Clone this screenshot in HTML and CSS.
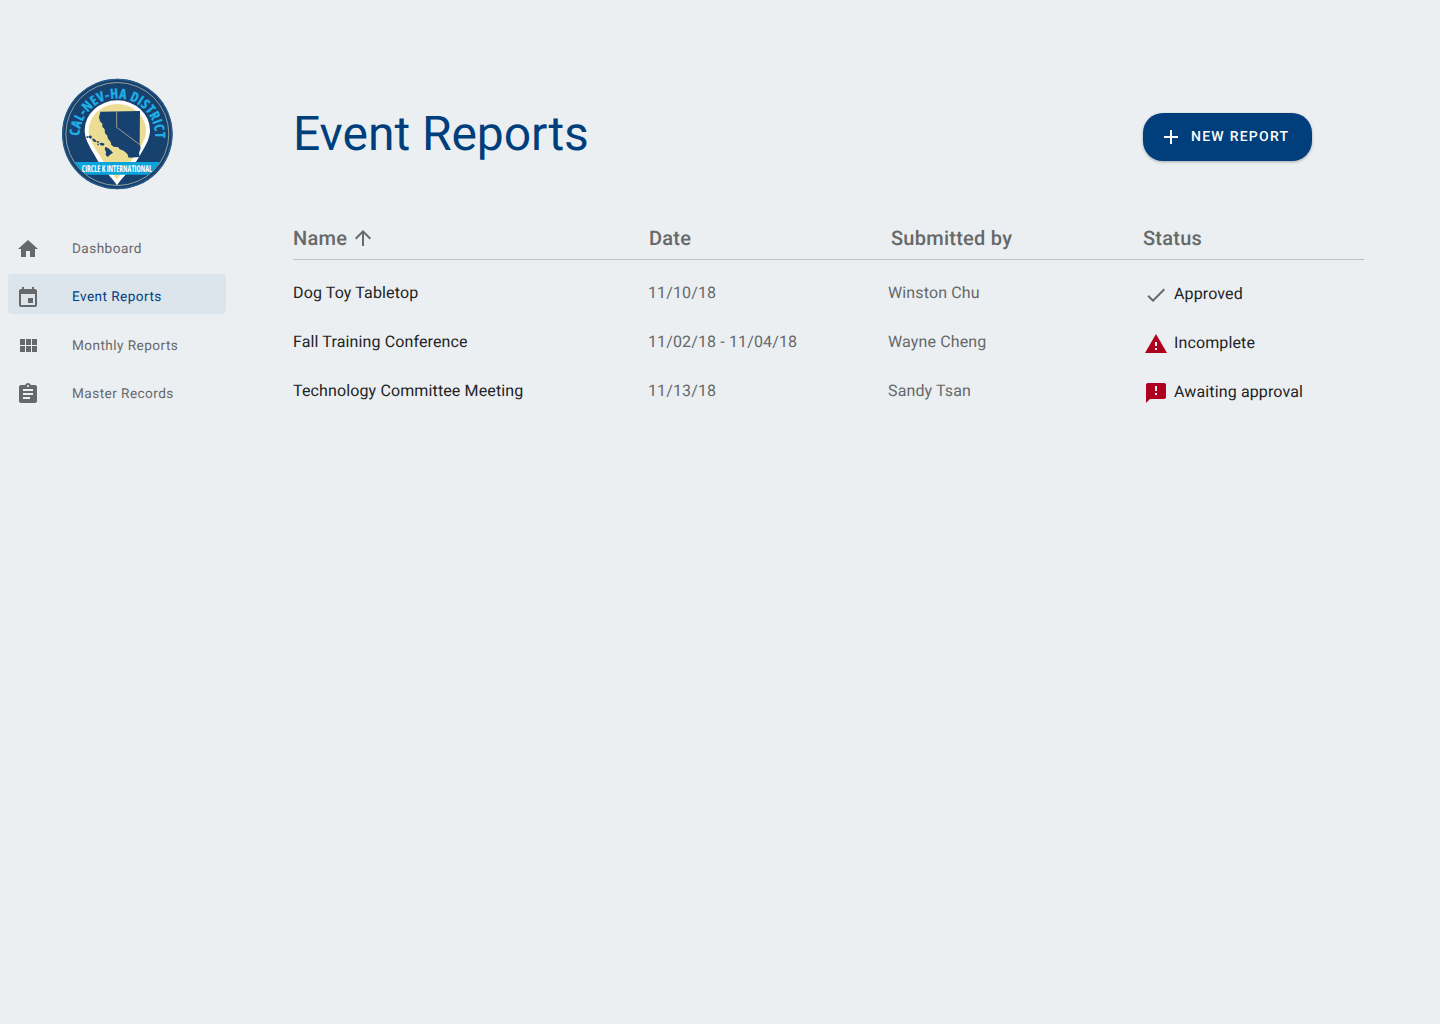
FILE: index.html
```html
<!DOCTYPE html>
<html lang="en">
<head>
<meta charset="utf-8">
<title>Event Reports</title>
<link rel="stylesheet" href="styles.css">
</head>
<body>
<div class="app">
  <aside class="sidebar">
    <svg class="logo" viewBox="0 0 360 360" role="img" aria-label="Cal-Nev-Ha District, Circle K International">
      <defs>
        <path id="arc" d="M67 187A114 114 0 1 1 295 187V215"/>
        <clipPath id="disc"><circle cx="181" cy="180" r="153"/></clipPath>
      </defs>
      <circle cx="181" cy="180" r="166" fill="#17416f"/>
      <circle cx="181" cy="180" r="164" fill="none" stroke="#2b6292" stroke-width="3"/>
      <circle cx="181" cy="180" r="154.500" fill="none" stroke="#a9b5a0" stroke-width="2.500"/>
      <path d="M180 334C166 311 137 290 113 244C96 216 83 193 83 169A98 90 0 0 1 279 169C279 193 266 216 249 244C223 290 194 311 180 334Z" fill="#fff"/>
      <path d="M180 317C168 298 148 279 127 243C108 214 95 194 95 170A86 80 0 0 1 267 170C267 194 254 214 235 243C212 279 192 298 180 317Z" fill="#ecdd95"/>
      <path d="M130 113L249 111L248 211L251 223L246 237L248 249L215 251L211 240L200 230L188 226L184 220L170 218L163 213L161 204L153 194L151 185L144 178L143 166L136 158L136 149L129 142L126 130Z" fill="#17416f"/>
      <path d="M179 113V160L247 211" fill="none" stroke="#d7cf94" stroke-width="2"/>
      <path d="M87 189l5-3 3 3-4 4zM95 187l5-3 5 4-3 6-7-3zM107 193l8 4 4 6-7 1-6-7zM119 202l8 0-2 4-5 0zM121 209l5 0-1 5-4-1zM127 208l9-2 7 4-4 5-8-1zM145 219l8 3 7 6 8 8-7 5-9 8-6-6 1-9-4-9z" fill="#17416f"/>
      <path clip-path="url(#disc)" d="M20 264H342V302H20Z" fill="#08a5dc"/>
      <text class="logo-arc"><textPath href="#arc" startOffset="1" textLength="362" lengthAdjust="spacing">CAL-NEV-HA DISTRICT</textPath></text>
      <text class="logo-band" x="74" y="293" textLength="211" lengthAdjust="spacingAndGlyphs">CIRCLE K INTERNATIONAL</text>
    </svg>
    <nav class="nav">
      <a class="nav-item">
        <svg class="icon" viewBox="0 0 24 24"><path d="M10 20v-6h4v6h5v-8h3L12 3 2 12h3v8z"/></svg>
        <span>Dashboard</span>
      </a>
      <a class="nav-item active">
        <svg class="icon" viewBox="0 0 24 24"><path d="M17 12h-5v5h5v-5zM16 1v2H8V1H6v2H5c-1.110 0-1.990.9-1.990 2L3 19c0 1.100.890 2 2 2h14c1.100 0 2-.9 2-2V5c0-1.100-.9-2-2-2h-1V1h-2zm3 18H5V8h14v11z"/></svg>
        <span>Event Reports</span>
      </a>
      <a class="nav-item">
        <svg class="icon" viewBox="0 0 24 24"><path d="M4 11h5V5H4v6zm0 7h5v-6H4v6zm6 0h5v-6h-5v6zm6 0h5v-6h-5v6zm-6-7h5V5h-5v6zm6-6v6h5V5h-5z"/></svg>
        <span>Monthly Reports</span>
      </a>
      <a class="nav-item">
        <svg class="icon" viewBox="0 0 24 24"><path d="M19 3h-4.180C14.400 1.840 13.300 1 12 1c-1.300 0-2.400.840-2.820 2H5c-1.100 0-2 .9-2 2v14c0 1.100.9 2 2 2h14c1.100 0 2-.9 2-2V5c0-1.100-.9-2-2-2zm-7 0c.550 0 1 .450 1 1s-.450 1-1 1-1-.450-1-1 .450-1 1-1zm2 14H7v-2h7v2zm3-4H7v-2h10v2zm0-4H7V7h10v2z"/></svg>
        <span>Master Records</span>
      </a>
    </nav>
  </aside>
  <main class="main">
    <header class="page-head">
      <h1>Event Reports</h1>
      <button class="new-report">
        <svg class="icon" viewBox="0 0 24 24"><path d="M19 13h-6v6h-2v-6H5v-2h6V5h2v6h6v2z"/></svg>
        <span>NEW REPORT</span>
      </button>
    </header>
    <section class="reports">
      <div class="row row-head">
        <div class="sorted">Name
          <svg class="icon" viewBox="0 0 24 24"><path d="M4 12l1.410 1.410L11 7.830V20h2V7.830l5.580 5.590L20 12l-8-8-8 8z"/></svg>
        </div>
        <div class="head-date">Date</div>
        <div class="head-submitted">Submitted by</div>
        <div>Status</div>
      </div>
      <div class="row">
        <div class="name">Dog Toy Tabletop</div>
        <div>11/10/18</div>
        <div>Winston Chu</div>
        <div class="status">
          <svg class="icon" viewBox="0 0 24 24"><path d="M9 16.170L4.830 12l-1.420 1.410L9 19 21 7l-1.410-1.410z"/></svg>
          <span>Approved</span>
        </div>
      </div>
      <div class="row">
        <div class="name">Fall Training Conference</div>
        <div>11/02/18 - 11/04/18</div>
        <div>Wayne Cheng</div>
        <div class="status alert">
          <svg class="icon" viewBox="0 0 24 24"><path d="M1 21h22L12 2 1 21zm12-3h-2v-2h2v2zm0-4h-2v-4h2v4z"/></svg>
          <span>Incomplete</span>
        </div>
      </div>
      <div class="row">
        <div class="name">Technology Committee Meeting</div>
        <div>11/13/18</div>
        <div>Sandy Tsan</div>
        <div class="status alert">
          <svg class="icon" viewBox="0 0 24 24"><path d="M20 2H4c-1.100 0-1.990.9-1.990 2L2 22l4-4h14c1.100 0 2-.9 2-2V4c0-1.100-.9-2-2-2zm-7 12h-2v-2h2v2zm0-4h-2V5h2v5z"/></svg>
          <span>Awaiting approval</span>
        </div>
      </div>
    </section>
  </main>
</div>
</body>
</html>
```
FILE: styles.css
```css
* { box-sizing: border-box; }
body {
  margin: 0;
  background: #ebeff2;
  font-family: Roboto, sans-serif;
  color: #666869;
  text-rendering: geometricPrecision;
}
.app { display: flex; min-height: 1024px; }
.icon { width: 24px; height: 24px; flex: none; fill: currentColor; }

.sidebar { width: 234px; padding: 74px 8px 0; flex: none; }
.logo { display: block; width: 120px; height: 120px; margin-left: 49px; }
.logo-arc {
  font: 700 41px "Liberation Sans Narrow", "Open Sans", sans-serif;
  font-stretch: 75%;
  fill: #1fb0e6;
  stroke: #1fb0e6;
  stroke-width: 1px;
}
.logo-band {
  font: 700 28px "Liberation Sans Narrow", "Open Sans", sans-serif;
  font-stretch: 75%;
  fill: #fff;
}
.nav { display: flex; flex-direction: column; gap: 8.400px; margin-top: 31.600px; }
.nav-item {
  display: flex;
  align-items: center;
  gap: 32px;
  height: 40px;
  padding: 7px 8px 0;
  border-radius: 4px;
  font-size: 13.600px;
  line-height: 20px;
  letter-spacing: .450px;
}
.nav-item span { margin-top: -.6px; }
.nav-item.active { background: #dce4ec; padding-top: 8px; }
.nav-item.active span { color: #003e7c; margin-top: -1.800px; }

.main { flex: 1; padding: 105px 76px 0 59px; }
.page-head { display: flex; justify-content: space-between; align-items: center; height: 64px; padding-right: 52px; }
h1 { margin: -6px 0 0; font-size: 48px; font-weight: 400; line-height: 56px; letter-spacing: -.05px; color: #003e7c; }
.new-report {
  display: flex;
  align-items: center;
  gap: 8px;
  width: 169px;
  height: 48px;
  padding: 0 16px;
  border: 0;
  border-radius: 20px;
  background: #003e7c;
  color: #fff;
  font: 500 14px/16px Roboto, sans-serif;
  letter-spacing: 1.250px;
  text-rendering: inherit;
  white-space: nowrap;
  box-shadow: 0 1px 3px rgba(0, 0, 0, .3);
}

.reports { margin-top: 51px; }
.row {
  display: grid;
  grid-template-columns: 355px 240px 255px 1fr;
  height: 49px;
  padding-top: 12px;
  font-size: 16px;
  line-height: 24px;
  letter-spacing: .13px;
}
.row-head {
  height: 40px;
  margin-bottom: 9px;
  padding: 6px 0 0;
  border-bottom: 1px solid #bec1c4;
  font-size: 20px;
  font-weight: 500;
  letter-spacing: .25px;
}
.head-date { padding-left: 1px; }
.head-submitted { padding-left: 3px; }
.sorted { display: flex; gap: 4px; }
.name, .status span { color: #222324; }
.status { display: flex; gap: 6px; padding-left: 1px; }
.status .icon { margin-top: 2px; }
.status span { margin-top: 1px; }
.status.alert .icon { color: #b00020; }
```
